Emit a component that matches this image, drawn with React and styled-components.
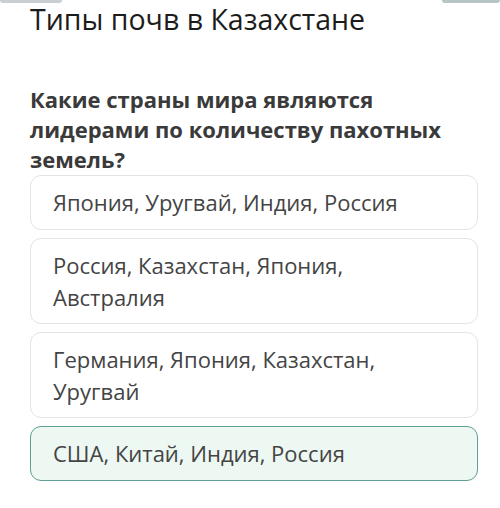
import React from "react";
import styled, { createGlobalStyle } from "styled-components";

const GlobalStyle = createGlobalStyle`
  html, body {
    margin: 0;
    padding: 0;
    background: #ffffff;
  }
  body {
    font-family: "Open Sans", "Liberation Sans", sans-serif;
  }
`;

const options = [
  { text: "Япония, Уругвай, Индия, Россия" },
  { text: "Россия, Казахстан, Япония, Австралия" },
  { text: "Германия, Япония, Казахстан, Уругвай" },
  { text: "США, Китай, Индия, Россия", selected: true },
];

const App = () => {
  return (
    <Page>
      <GlobalStyle />
      <TopEdge>
        <EdgeTab $w={62} $color="#c9cfd1" />
        <EdgeTab $w={58} $color="#b7c5c6" />
      </TopEdge>
      <Title>Типы почв в Казахстане</Title>
      <Question>
        Какие страны мира являются лидерами по количеству пахотных земель?
      </Question>
      <OptionList>
        {options.map((o) => (
          <Option key={o.text} $selected={o.selected}>
            {o.text}
          </Option>
        ))}
      </OptionList>
    </Page>
  );
};

const Page = styled.div`
  width: 500px;
  height: 508px;
  overflow: hidden;
  display: flex;
  flex-direction: column;
`;

// bottoms of the buttons that sit above the visible area
const TopEdge = styled.div`
  display: flex;
  justify-content: space-between;
  height: 3px;
`;

const EdgeTab = styled.div`
  width: ${(p) => p.$w}px;
  height: 3px;
  background: ${(p) => p.$color};
  border-radius: 0 0 4px 4px;
`;

const Title = styled.h1`
  margin: 0 0 0 30px;
  font-size: 28.5px;
  font-weight: 400;
  line-height: 32px;
  color: #1c1c1c;
  white-space: nowrap;
`;

const Question = styled.p`
  margin: 49px 0 0 30px;
  width: 430px;
  font-size: 22px;
  font-weight: 700;
  line-height: 30px;
  color: #3a3a3a;
`;

const OptionList = styled.div`
  display: flex;
  flex-direction: column;
  gap: 8px;
  margin: 1px 22px 0 30px;
`;

const Option = styled.div`
  box-sizing: border-box;
  min-height: 55px;
  padding: 10px 30px 10px 22px;
  border: 1.5px solid ${(p) => (p.$selected ? "#5f9f95" : "#e4e4e4")};
  border-radius: 11px;
  background: ${(p) => (p.$selected ? "#edf8f3" : "#ffffff")};
  font-size: 22px;
  line-height: 32px;
  color: #444444;
`;

export default App;
